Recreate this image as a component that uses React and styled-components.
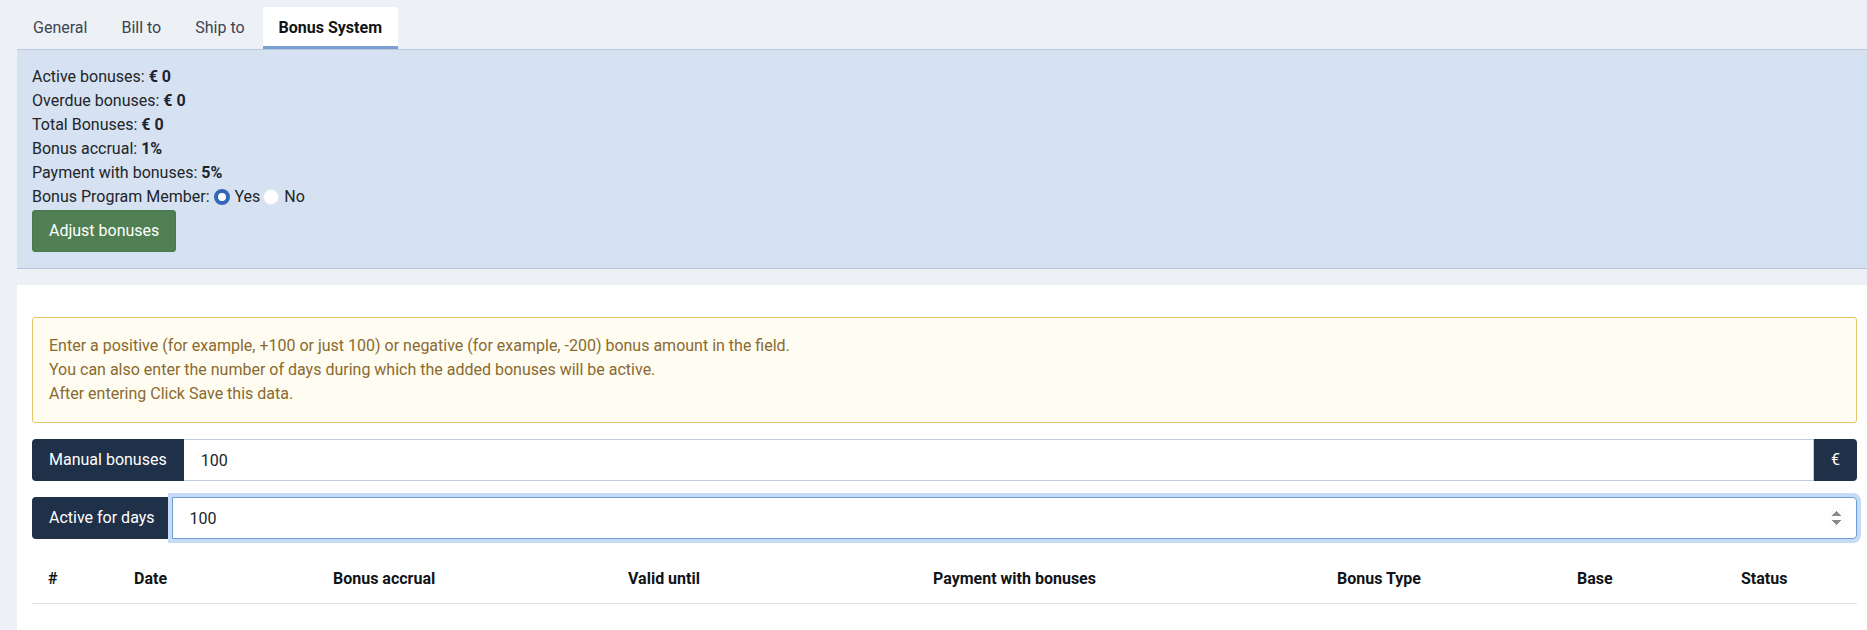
import React from "react";
import styled, { createGlobalStyle } from "styled-components";

const GlobalStyle = createGlobalStyle`
  html, body {
    margin: 0;
    padding: 0;
    background: #edf1f6;
    overflow: hidden;
  }
  body {
    font-family: Roboto, "Noto Sans", "Liberation Sans", sans-serif;
    font-size: 16px;
    line-height: 24px;
    color: #212529;
  }
  * {
    box-sizing: border-box;
  }
`;

const Page = styled.div`
  width: 1873px;
  padding-left: 17px;
  min-height: 630px;
`;

const TabBar = styled.div`
  display: flex;
  gap: 2px;
  padding: 7px 0 0;
`;

const Tab = styled.div`
  height: 42px;
  display: flex;
  align-items: center;
  padding: 3px 16px 0;
  border-bottom: 3px solid ${p => (p.active ? "#7b9fd3" : "transparent")};
  background: ${p => (p.active ? "#ffffff" : "transparent")};
  color: ${p => (p.active ? "#111418" : "#3b4451")};
  font-weight: ${p => (p.active ? 700 : 400)};
  border-radius: 3px 3px 0 0;
`;

const Panel = styled.div`
  background: #d6e2f2;
  border-top: 1px solid #b9c8dc;
  border-bottom: 1px solid #b5c4d9;
  padding: 15px 15px 16px;
`;

const InfoLine = styled.div`
  display: flex;
  align-items: center;
  gap: 4px;
  b {
    font-weight: 700;
    color: #1d2330;
  }
`;

const Radio = styled.span`
  width: 16px;
  height: 16px;
  border-radius: 50%;
  background: #ffffff;
  border: ${p => (p.checked ? "4px solid #3568b4" : "1px solid #e3eaf3")};
  display: inline-block;
`;

const RadioLabel = styled.span`
  margin-left: 1px;
  margin-right: -1px;
`;

const GreenButton = styled.button`
  margin-top: 1px;
  background: #4f7f52;
  color: #ffffff;
  border: 1px solid #4a784d;
  border-radius: 3px;
  font-family: inherit;
  font-size: 16px;
  line-height: 24px;
  padding: 8px 16px;
  cursor: pointer;
`;

const Card = styled.div`
  margin-top: 16px;
  background: #ffffff;
  padding: 32px 15px 24px;
  min-height: 345px;
`;

const Content = styled.div`
  width: 1825px;
`;

const Alert = styled.div`
  background: #fffcf2;
  border: 1px solid #e6c46c;
  border-radius: 3px;
  color: #8a6a2e;
  padding: 16px;
`;

const InputGroup = styled.div`
  display: flex;
  height: 42px;
  margin-top: 16px;
`;

const Addon = styled.div`
  display: flex;
  align-items: center;
  padding: 0 17px;
  background: #1f3049;
  color: #ffffff;
  border-radius: ${p => (p.right ? "0 4px 4px 0" : "4px 0 0 4px")};
  white-space: nowrap;
`;

const Field = styled.input`
  flex: 1;
  min-width: 0;
  font-family: inherit;
  font-size: 16px;
  color: #212529;
  padding: 0 16px 0 17px;
  background: #ffffff;
  outline: none;
  border: 1px solid ${p => (p.focused ? "#6f9bd6" : "#c3cdd9")};
  border-left: ${p => (p.focused ? "1px solid #6f9bd6" : "none")};
  border-radius: ${p => (p.last ? "0 4px 4px 0" : "0")};
  box-shadow: ${p => (p.focused ? "0 0 0 4px #c6dbf5" : "none")};
  position: relative;
  z-index: ${p => (p.focused ? 1 : 0)};

  &::-webkit-inner-spin-button {
    opacity: 1;
    margin-right: -4px;
  }
`;

const Table = styled.div`
  margin-top: 16px;
  display: grid;
  grid-template-columns: 86px 199px 295px 305px 404px 240px 164px 132px;
  border-bottom: 1px solid #dee2e6;
`;

const Th = styled.div`
  padding: 12px 16px;
  font-weight: 700;
  color: #111418;
  white-space: nowrap;
`;

const tabs = ["General", "Bill to", "Ship to", "Bonus System"];

const info = [
  ["Active bonuses:", "€ 0"],
  ["Overdue bonuses:", "€ 0"],
  ["Total Bonuses:", "€ 0"],
  ["Bonus accrual:", "1%"],
  ["Payment with bonuses:", "5%"]
];

const columns = [
  "#",
  "Date",
  "Bonus accrual",
  "Valid until",
  "Payment with bonuses",
  "Bonus Type",
  "Base",
  "Status"
];

const App = () => (
  <Page>
    <GlobalStyle />
    <TabBar>
      {tabs.map(t => (
        <Tab key={t} active={t === "Bonus System"}>
          {t}
        </Tab>
      ))}
    </TabBar>

    <Panel>
      {info.map(([label, value]) => (
        <InfoLine key={label}>
          {label} <b>{value}</b>
        </InfoLine>
      ))}
      <InfoLine>
        Bonus Program Member:
        <Radio checked />
        <RadioLabel>Yes</RadioLabel>
        <Radio />
        <RadioLabel>No</RadioLabel>
      </InfoLine>
      <GreenButton>Adjust bonuses</GreenButton>
    </Panel>

    <Card>
      <Content>
        <Alert>
          Enter a positive (for example, +100 or just 100) or negative (for
          example, -200) bonus amount in the field.
          <br />
          You can also enter the number of days during which the added bonuses
          will be active.
          <br />
          After entering Click Save this data.
        </Alert>

        <InputGroup>
          <Addon>Manual bonuses</Addon>
          <Field type="text" defaultValue="100" />
          <Addon right>€</Addon>
        </InputGroup>

        <InputGroup>
          <Addon>Active for days</Addon>
          <Field type="number" defaultValue="100" focused last />
        </InputGroup>

        <Table>
          {columns.map(c => (
            <Th key={c}>{c}</Th>
          ))}
        </Table>
      </Content>
    </Card>
  </Page>
);

export default App;
